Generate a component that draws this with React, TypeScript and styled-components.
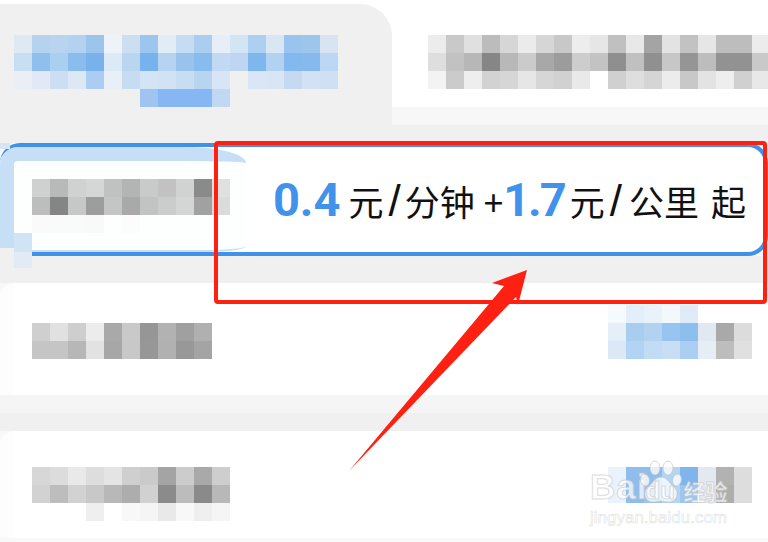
import styled, { createGlobalStyle } from "styled-components";

const GlobalStyle = createGlobalStyle`
    html, body {
        margin: 0;
        padding: 0;
        background: #fff;
    }
`;

const Page = styled.div`
    position: relative;
    width: 768px;
    height: 542px;
    overflow: hidden;
    background: #f8f8f8;
    display: flex;
    flex-direction: column;
    font-family: "Noto Sans CJK SC", Roboto, sans-serif;
`;
const TopRow = styled.div`
    display: flex;
    height: 125px;
    background: #fff;
`;
const TopLeft = styled.div`
    box-sizing: border-box;
    width: 392px;
    margin-top: 4px;
    padding: 31px 0 0 14px;
    background: #f0f0f0;
    border-top-right-radius: 32px;
`;
const TopRight = styled.div`
    box-sizing: border-box;
    flex: 1;
    padding: 35px 0 0 36px;
    border-bottom: 18px solid #f7f7f8;
    overflow: hidden;
`;
const Band = styled.div<{ $height: number }>`
    height: ${({ $height }) => $height}px;
    background: #f0f0f1;
`;
const TwoToneBand = styled.div`
    height: 36px;
    background: linear-gradient(#f5f5f5 50%, #f0f0f0 50%);
`;
const SelectedCard = styled.div`
    position: relative;
    box-sizing: border-box;
    height: 113px;
    display: flex;
    justify-content: space-between;
    background: #fff;
    border: 4px solid #4291e9;
    border-left: 0;
    border-radius: 20px;
    &:before {
        content: "";
        position: absolute;
        left: 0;
        top: -4px;
        width: 10px;
        height: 6px;
        background: #d6e5f3;
    }
    &:after {
        content: "";
        position: absolute;
        left: 0;
        top: 86px;
        width: 32px;
        height: 35px;
        background:
            linear-gradient(#c6def6 15px, #f0f0f1 15px) 0 0 / 14px 100% no-repeat,
            linear-gradient(#d0e4f6 55%, #e2ebf5 55%) 14px 0 / 18px 100% no-repeat;
    }
`;
const PaleHighlight = styled.div`
    box-sizing: border-box;
    width: 246px;
    padding: 18px 0 0 18px;
    background: #fdfefe;
    border-top: 14px solid #c6def6;
    border-left: 14px solid #c6def6;
    border-bottom: 2px solid #c6def6;
    border-radius: 18px 60px 40px 0 / 18px 16px 6px 0;
`;
const Price = styled.div`
    display: flex;
    align-items: baseline;
    padding: 30px 18px 0 0;
    color: #111;
    font-size: 35px;
    font-weight: 400;
    line-height: 46px;
`;
const Amount = styled.span<{ $gap: number; $spacing: number }>`
    margin-right: ${({ $gap }) => $gap}px;
    color: #4192ea;
    font-family: Roboto, sans-serif;
    font-size: 47px;
    font-weight: 700;
    letter-spacing: ${({ $spacing }) => $spacing}px;
`;
const Slash = styled.span<{ $after: number }>`
    margin: 0 ${({ $after }) => $after}px 0 5px;
    font-family: "Liberation Sans", sans-serif;
    font-size: 44px;
    font-weight: 400;
    line-height: 46px;
`;
const Plus = styled.span`
    margin-left: 9px;
`;
const LastWord = styled.span`
    margin-left: 12px;
`;
const ListCard = styled.div<{ $height: number; $align: string }>`
    box-sizing: border-box;
    height: ${({ $height }) => $height}px;
    display: flex;
    justify-content: space-between;
    align-items: ${({ $align }) => $align};
    padding: ${({ $align }) => ($align === "flex-end" ? "0 16px 36px 18px" : "36px 16px 0 18px")};
    background: #fff;
    border-left: 14px solid #fdfdfd;
    border-top-left-radius: 14px;
`;
const Mosaic = styled.div<{ $cols: number }>`
    flex: none;
    display: grid;
    grid-template-columns: repeat(${({ $cols }) => $cols}, 18px);
    grid-auto-rows: 18px;
`;
const Cell = styled.span<{ $color: string }>`
    background: ${({ $color }) => ($color ? "#" + $color : "transparent")};
`;
const RedFrame = styled.div`
    position: absolute;
    left: 214px;
    top: 141px;
    box-sizing: border-box;
    width: 553px;
    height: 163px;
    border: 4px solid #fe2112;
    border-radius: 4px;
`;
const Arrow = styled.svg`
    position: absolute;
    left: 340px;
    top: 260px;
`;
const Watermark = styled.div`
    position: absolute;
    left: 590px;
    top: 458px;
    width: 150px;
    display: flex;
    flex-direction: column;
    color: rgba(255, 255, 255, 0.72);
    -webkit-text-stroke: 1px rgba(190, 190, 190, 0.55);
`;
const MarkRow = styled.div`
    display: flex;
    align-items: flex-end;
    height: 47px;
`;
const MarkLatin = styled.span`
    font-family: "Liberation Sans", sans-serif;
    font-size: 35px;
    font-weight: 700;
    line-height: 36px;
    letter-spacing: 1px;
`;
const PawBox = styled.div`
    position: relative;
    flex: none;
    width: 44px;
    height: 45px;
    margin-left: -8px;
`;
const PawText = styled.span`
    position: absolute;
    left: 6px;
    bottom: 0;
    font-family: "Liberation Sans", sans-serif;
    font-size: 24px;
    font-weight: 700;
    line-height: 28px;
`;
const MarkCjk = styled.span`
    flex: none;
    margin-left: 0;
    font-size: 22px;
    font-weight: 700;
    line-height: 30px;
    white-space: nowrap;
`;
const MarkUrl = styled.div`
    margin-top: 3px;
    font-family: "Liberation Sans", sans-serif;
    font-size: 17px;
    line-height: 20px;
    color: rgba(255, 255, 255, 0.5);
    -webkit-text-stroke: 0.6px rgba(200, 200, 200, 0.55);
    white-space: nowrap;
`;

const blueTitle = [
    "dfe9f4 b5d2ee b9d4ef b3d1f0 9cc5ec eef3f9 ccdff1 9dc6ee e1ecf6 c6dcf2 abcdf0 e6eef8 d3e4f3 accff2 d9e7f4 98c4ef 9dc6ed d8e4f1",
    "c7def3 8fbfec a9d0f0 8abdee 77b2ec dce9f6 b9d5ef 76b3ee b6d4f1 99c3ed 88bbee c2d9f3 bfd6f3 80b6ee b3d2f2 84b9ef 86baee bcd7f3",
    "eaeff6 e0e9f5 ccdff2 dde8f5 accdf2 e9eff7 c6dcf1 d3e4f4 d0e2f3 c7ddf2 b9d4ef d8e5f4 - d9e6f5 d7e5f4 c5d9f1 d2e1f3 cfe0f3",
    "- - - - - - - 9fc4f1 86b6f4 86b6f4 86b6f4 c1d8f3 - - - - - -",
];
const grayTitle = [
    "ececec c9c9c9 e0e0e0 bcbcbc d6d6d6 ebebeb d6d6d6 c8c8c8 ededed e6e6e6 c0c0c0 e8e8e8 a4a4a4 e3e3e3 c2c2c2 e6e6e6 bdbdbd bdbdbd ececec",
    "dedede c2c2c2 b7b7b7 868686 b8b8b8 cbcbcb a8a8a8 9c9c9c cdcdcd c3c3c3 8f8f8f c0c0c0 909090 c7c7c7 959595 bdbdbd 929292 929292 c9c9c9",
    "f3f3f3 cbcbcb eeeeee d2d2d2 d6d6d6 e6e6e6 d6d6d6 d1d1d1 e9e9e9 - d0d0d0 dedede d5d5d5 ececec c8c8c8 e3e3e3 eeeeee d0d0d0 e8e8e8",
];
const selectedLabel = [
    "cfd0d0 b8b9b9 d0d1d1 d5d6d6 c0c1c1 b3b4b4 c9caca c1c2c1 d1d2d2 8a8a8a e0e0e0",
    "bcbdbc 858585 c6c7c7 9d9d9d c4c5c4 a9a9a9 c2c3c3 cbcccc d4d5d5 a0a1a1 dadbdb",
    "fbfafa fbfafa fbfafa f9f9f9 - fcfcfc - - - - -",
];
const rowLabel = [
    "cfcfcf e1e1e1 cecece ececec a9a9a9 c9c9c9 969696 b2b2b2 a0a0a0 b0b0b0",
    "c5c5c5 c5c5c5 b7b7b7 e2e2e2 a7a7a7 c8c8c8 979797 b1b1b1 989898 a4a4a4",
];
const rowValue = [
    "f6fafc e2eefa e9f1fa f3f8fb dfebf6 - - -",
    "e4eff8 a9cdee b1d3f1 97c4f0 8dbfee e2e8f1 a9a9a9 dcdcdc",
    "dbe9f7 b3d3f4 c3dcf5 c9def5 abcff3 e6edf5 bdbdbd e0e0e0",
];
const lastLabel = [
    "d7d7d7 dcdcdc e9e9e9 dddddd e4e4e4 cfcfcf cacaca a4a4a4 cccccc a9a9a9 cecece",
    "d2d2d2 bdbdbd d2d2d2 c8c8c8 b8b8b8 adadad d1d1d1 8b8b8b bcbcbc 8a8a8a b8b8b8",
    "- - - efefef - f8f8f8 f5f5f5 e9e9e9 f8f8f8 efefef f5f5f5",
];
const lastValue = [
    "eaf3fb 8fbeee 8fbeee b5d4f4 80b5ec e4e9f0 b2b2b2 dddddd",
    "eaf3fb 8fbeee 9cc6f0 b5d4f4 9cc6f0 e4e9f0 aeaeae dddddd",
];

// the blurred text of the picture, one colour per block
const Blocks = ({ rows }: { rows: string[] }) => {
    const cells = rows.flatMap((row) => row.split(" "));
    return (
        <Mosaic $cols={rows[0].split(" ").length}>
            {cells.map((color, i) => (
                <Cell key={i} $color={color === "-" ? "" : color} />
            ))}
        </Mosaic>
    );
};

const App = () => {
    return (
        <Page>
            <GlobalStyle />
            <TopRow>
                <TopLeft>
                    <Blocks rows={blueTitle} />
                </TopLeft>
                <TopRight>
                    <Blocks rows={grayTitle} />
                </TopRight>
            </TopRow>
            <Band $height={18} />
            <SelectedCard>
                <PaleHighlight>
                    <Blocks rows={selectedLabel} />
                </PaleHighlight>
                <Price>
                    <Amount $gap={8} $spacing={0}>0.4</Amount>元<Slash $after={4}>/</Slash>分钟<Plus>+</Plus>
                    <Amount $gap={5} $spacing={-2}>1.7</Amount>元<Slash $after={7}>/</Slash>公里<LastWord>起</LastWord>
                </Price>
            </SelectedCard>
            <Band $height={27} />
            <ListCard $height={112} $align="flex-end">
                <Blocks rows={rowLabel} />
                <Blocks rows={rowValue} />
            </ListCard>
            <TwoToneBand />
            <ListCard $height={107} $align="flex-start">
                <Blocks rows={lastLabel} />
                <Blocks rows={lastValue} />
            </ListCard>
            <RedFrame />
            <Arrow width="200" height="220" viewBox="340 260 200 220">
                <polygon points="527,270 492,283 504,286 349,471 516,297 518,305" fill="#fe2112" />
            </Arrow>
            <Watermark>
                <MarkRow>
                    <MarkLatin>Bai</MarkLatin>
                    <PawBox>
                        <svg width="44" height="45" viewBox="0 0 44 45">
                            <g fill="rgba(255,255,255,0.75)" stroke="rgba(190,190,190,0.6)">
                                <ellipse cx="6" cy="20" rx="4.5" ry="6" transform="rotate(-15 6 20)" />
                                <ellipse cx="16" cy="8" rx="5" ry="7" />
                                <ellipse cx="29" cy="8" rx="5" ry="7" />
                                <ellipse cx="38" cy="20" rx="4.5" ry="6" transform="rotate(15 38 20)" />
                                <path d="M22 17c6 0 8 6 13 10 6 5 3 16-6 15-3 0-5-1-7-1s-4 1-7 1C6 43 3 32 9 27c5-4 7-10 13-10z" />
                            </g>
                        </svg>
                        <PawText>du</PawText>
                    </PawBox>
                    <MarkCjk>经验</MarkCjk>
                </MarkRow>
                <MarkUrl>jingyan.baidu.com</MarkUrl>
            </Watermark>
        </Page>
    );
};

export default App;
